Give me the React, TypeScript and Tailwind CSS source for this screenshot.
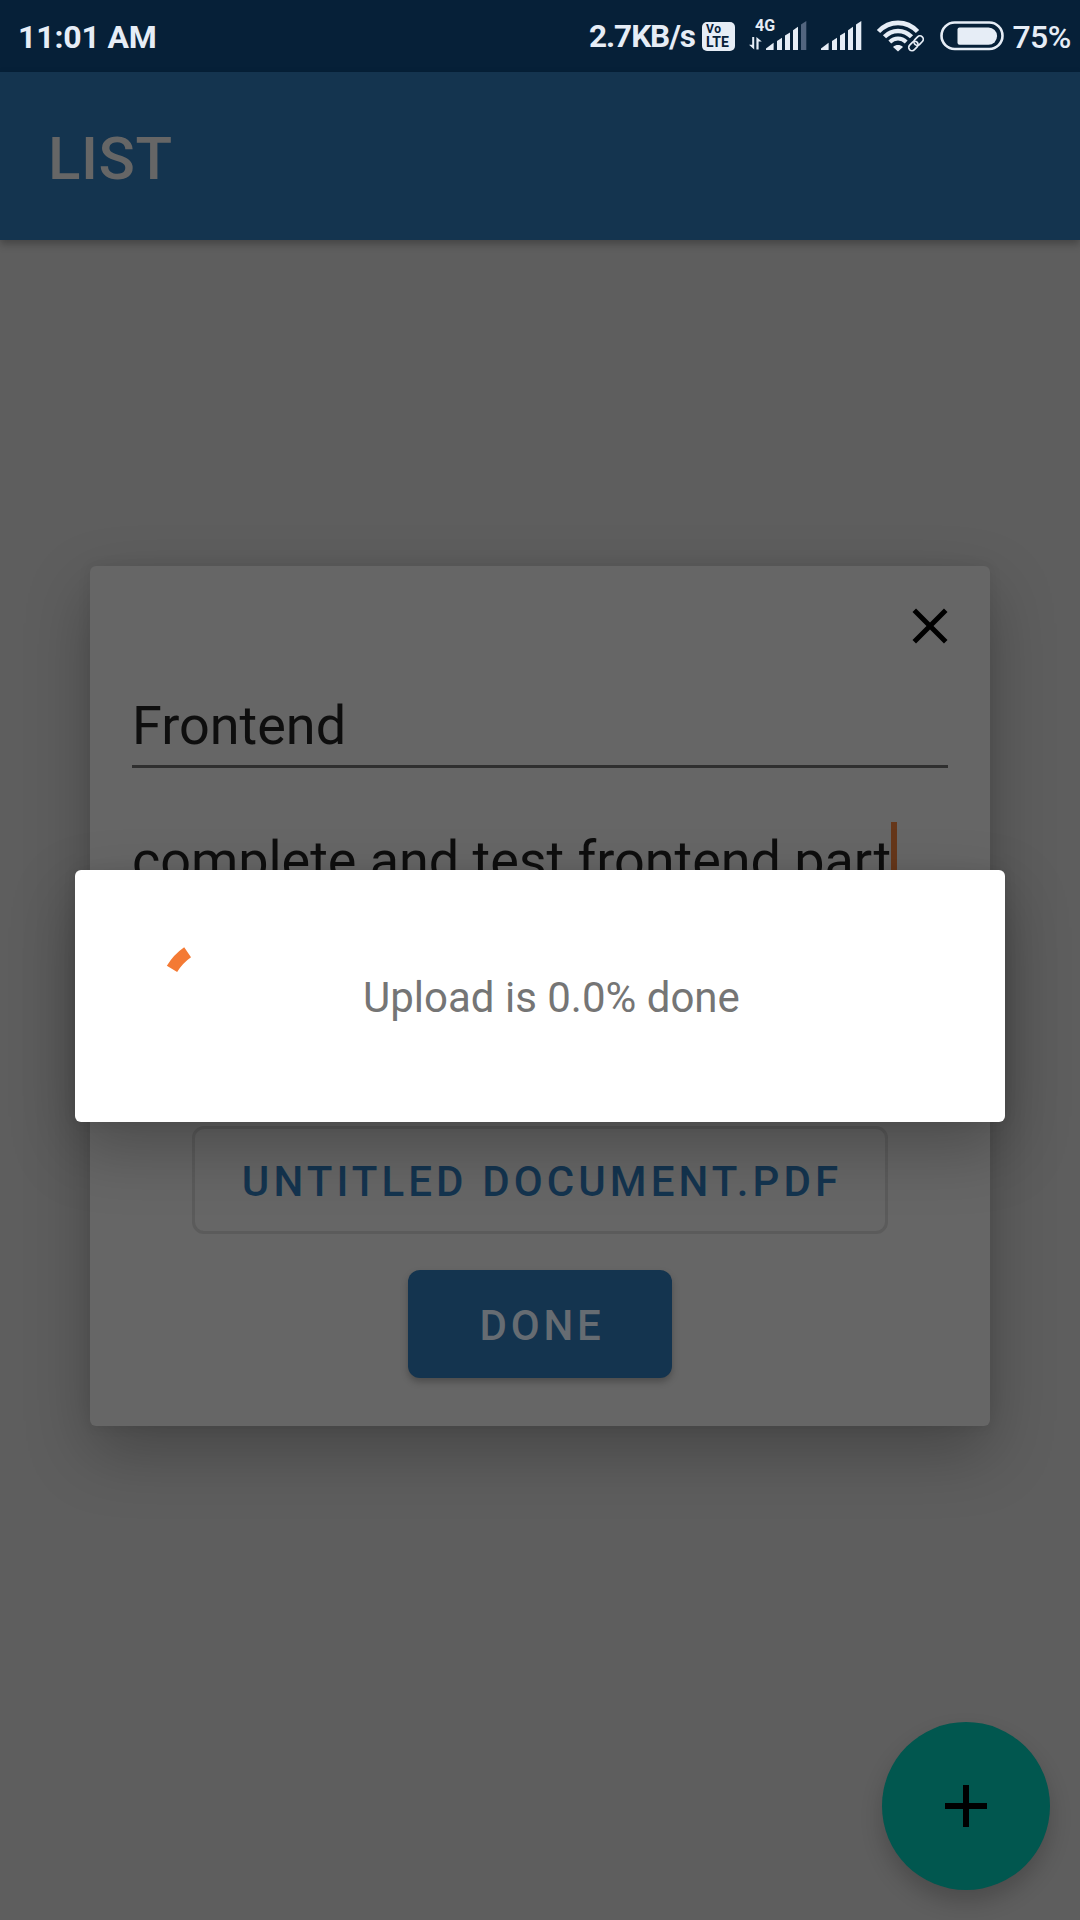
import React from "react";

const INK = "#e6edf6";

function SignalBars({ weakLast = false }: { weakLast?: boolean }) {
  return (
    <svg width="41" height="30" viewBox="0 0 41 30" fill={INK} className="shrink-0">
      <path d="M0 29V27.5L7.6 21.8V29Z" />
      <path d="M11 29V20L16 16.8V29Z" />
      <path d="M19 29V14.6L24 11.4V29Z" />
      <path d="M27 29V9.2L32 5.8V29Z" />
      <path d="M35 29V3.4L40.3 0V29Z" fill={weakLast ? "#52657f" : INK} />
    </svg>
  );
}

function StatusBar() {
  return (
    <div className="flex h-[72px] shrink-0 items-center bg-[#062038] text-[#e6edf6]">
      <div className="w-[569px] pl-[18px] pt-[2px] text-[32px] leading-[40px] font-bold tracking-[-0.15px]">11:01 AM</div>
      <div className="w-[115px] pl-[20px] pt-[2px] text-[31.5px] leading-[40px] font-bold tracking-[-1.05px] whitespace-nowrap">2.7KB/s</div>
      <div className="ml-[18px] flex h-[29px] w-[33px] flex-col rounded-[5px] bg-[#e6edf6] pt-[2px] pl-[4px] text-[#062038]">
        <span className="text-[12px] leading-[11px] font-bold tracking-[0.8px]">Vo</span>
        <span className="text-[14px] leading-[15px] font-bold tracking-[0.2px]">LTE</span>
      </div>
      <div className="relative ml-[14px] flex w-[58px] justify-end">
        <span className="absolute top-[-5px] left-[6px] text-[16px] leading-[20px] font-bold">4G</span>
        <svg width="13" height="13" viewBox="0 0 13 13" className="absolute bottom-[1px] left-0" fill={INK}>
          <path d="M3.2 0H5.2V12.4L0 7.8H3.2ZM7.4 12.4V0L12.8 4.6H9.6V12.4Z" />
        </svg>
        <SignalBars weakLast />
      </div>
      <div className="ml-[14px]">
        <SignalBars />
      </div>
      <svg width="48" height="32" viewBox="876 20 48 32" className="ml-[14px] shrink-0" fill="none">
        <g stroke={INK}>
          <path d="M878.5 31.5C889.5 20 906.5 20 917.5 31.5" strokeWidth="4.6" />
          <path d="M884.5 36.8C892 29 904 29 911.5 36.8" strokeWidth="4.4" />
          <path d="M889.8 42C894.5 37.4 901.5 37.4 906.2 42" strokeWidth="4" />
        </g>
        <path d="M893 47C896 44.4 900 44.4 903 47L898 51.4Z" fill={INK} />
        <g transform="rotate(-46 916 43.3)">
          <rect x="907" y="40" width="10.5" height="6.6" rx="3.3" stroke="#062038" strokeWidth="4" />
          <rect x="907" y="40" width="10.5" height="6.6" rx="3.3" stroke={INK} strokeWidth="1.7" />
          <rect x="914.5" y="40" width="10.5" height="6.6" rx="3.3" stroke={INK} strokeWidth="1.7" />
        </g>
      </svg>
      <svg width="66" height="30" viewBox="0 0 66 30" className="ml-[15px] shrink-0">
        <rect x="2.5" y="1.5" width="61" height="26.5" rx="13.2" fill="none" stroke={INK} strokeWidth="2.6" />
        <path d="M20.5 6.5H49.5A8.6 8.6 0 0 1 49.5 23.7H20.5A2 2 0 0 1 18.5 21.7V8.5A2 2 0 0 1 20.5 6.5Z" fill={INK} />
      </svg>
      <div className="pl-[7.5px] pt-[2px] text-[32px] leading-[40px] font-medium tracking-[-0.6px]">75%</div>
    </div>
  );
}

function TaskCard() {
  return (
    <section className="flex h-[860px] w-[900px] flex-col rounded-[6px] bg-[#666666] px-[42px] pt-[30px] shadow-[0_26px_64px_rgba(0,0,0,0.26),0_0_14px_rgba(0,0,0,0.07)]">
      <button className="mr-[-12px] self-end" aria-label="Close">
        <svg width="60" height="60" viewBox="0 0 24 24" fill="#000">
          <path d="M19 6.41L17.59 5 12 10.59 6.41 5 5 6.41 10.59 12 5 17.59 6.41 19 12 13.41 17.59 19 19 17.59 13.41 12z" />
        </svg>
      </button>
      <div className="h-[112px] border-b-[3px] border-[#2f2f2f] pt-[38px] text-[54px] leading-[64px] text-[#0e0e0e]">
        Frontend
      </div>
      <div className="flex h-[136px] items-center border-b-[3px] border-[#2f2f2f] pt-[52px] text-[54px] leading-[78px] tracking-[-0.05px] whitespace-nowrap text-[#0e0e0e]">
        complete and test frontend part
        <span className="h-[78px] w-[6px] bg-[#66371a]" />
      </div>
      <div className="mt-[222px] flex h-[108px] w-[696px] items-center justify-center self-center rounded-[12px] border-[3px] border-[#5b5b5b] pt-[3px] pl-[4px] text-[42px] font-medium tracking-[4.1px] text-[#14344f]">
        UNTITLED DOCUMENT.PDF
      </div>
      <div className="mt-[36px] flex h-[108px] w-[264px] items-center justify-center self-center rounded-[12px] bg-[#14344f] pt-[3px] pl-[4px] text-[42px] font-medium tracking-[3.75px] text-[#666c72] shadow-[0_4px_7px_rgba(0,0,0,0.25)]">
        DONE
      </div>
    </section>
  );
}

function UploadDialog() {
  return (
    <div className="flex h-[252px] w-[930px] items-center rounded-[6px] bg-white pl-[71px] shadow-[0_26px_64px_rgba(0,0,0,0.26),0_0_14px_rgba(0,0,0,0.07)]">
      <svg width="144" height="144" viewBox="0 0 144 144" fill="none">
        <path d="M26 44.9A53.7 53.7 0 0 1 41.6 28.2" stroke="#f47a34" strokeWidth="12" />
      </svg>
      <span className="ml-[73px] pt-[3px] text-[42px] leading-[50px] whitespace-nowrap text-[#757575]">
        Upload is 0.0% done
      </span>
    </div>
  );
}

export default function App() {
  return (
    <main className="relative flex h-[1920px] w-[1080px] flex-col overflow-hidden bg-[#5e5e5e] font-[Roboto,sans-serif]">
      <StatusBar />
      <header className="flex h-[168px] shrink-0 items-center bg-[#14344f] pt-[5px] pl-[48px] text-[60px] leading-[70px] font-medium tracking-[0.6px] text-[#666666] shadow-[0_4px_8px_rgba(0,0,0,0.28)]">
        LIST
      </header>
      <button
        aria-label="Add"
        className="absolute right-[30px] bottom-[30px] flex size-[168px] items-center justify-center rounded-full bg-[#01574f] shadow-[0_12px_22px_rgba(0,0,0,0.2)]"
      >
        <svg width="72" height="72" viewBox="0 0 24 24" fill="#000">
          <path d="M19 13h-6v6h-2v-6H5v-2h6V5h2v6h6v2z" />
        </svg>
      </button>
      <div className="absolute inset-x-0 top-[72px] bottom-0 flex items-center justify-center">
        <TaskCard />
      </div>
      <div className="absolute inset-x-0 top-[72px] bottom-0 flex items-center justify-center">
        <UploadDialog />
      </div>
    </main>
  );
}
